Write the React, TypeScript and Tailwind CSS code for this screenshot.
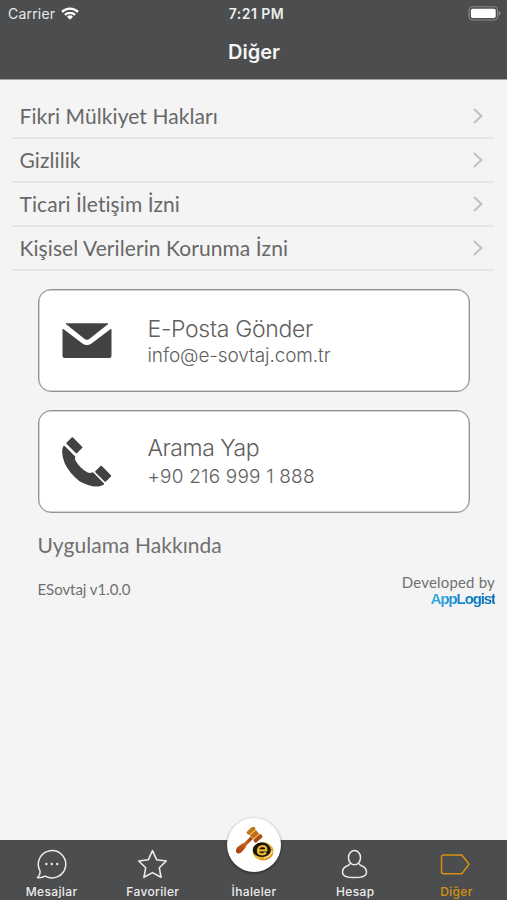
import React from "react";

const links = [
  "Fikri Mülkiyet Hakları",
  "Gizlilik",
  "Ticari İletişim İzni",
  "Kişisel Verilerin Korunma İzni",
];

function StatusBar() {
  return (
    <div className="relative flex h-[27px] items-center justify-between pl-[8px] pr-[6px] text-white">
      <div className="flex items-center gap-[6px]">
        <span className="text-[14px] leading-[20px] tracking-[0.2px] text-[#e8e8e8]">Carrier</span>
        <svg width="18" height="13" viewBox="0 0 18 13" fill="none" stroke="#fff" strokeWidth="2.3">
          <path d="M1 4.9a11.4 11.4 0 0 1 16 0" />
          <path d="M3.900 7.900a7.300 7.300 0 0 1 10.200 0" />
          <path d="M9 12.700 6 9.800a4.300 4.300 0 0 1 6 0z" fill="#fff" stroke="none" />
        </svg>
      </div>
      <span className="absolute inset-x-0 pl-[6px] text-center text-[14px] leading-[20px] font-semibold tracking-[0.45px] text-[#ededed]">
        7:21 PM
      </span>
      <svg width="33" height="15" viewBox="0 0 33 15">
        <rect x="1" y="0.8" width="28.6" height="13.2" rx="3.6" fill="none" stroke="#8a8b8c" strokeWidth="1.1" />
        <rect x="2.9" y="2.7" width="24.8" height="9.4" rx="1.8" fill="#fff" />
        <path d="M30.8 5.3q1.6.5 1.6 2.1t-1.6 2.1z" fill="#98999a" />
      </svg>
    </div>
  );
}

function ContactCard({ icon, children }: { icon: React.ReactNode; children: React.ReactNode }) {
  return (
    <section className="flex h-[103px] items-center rounded-[13px] border border-[#929292] bg-white pl-[23px] font-light text-[#606060] shadow-[inset_0_0_0_0.5px_#a8a8a8]">
      <div className="flex w-[86px] items-center">{icon}</div>
      <div className="flex flex-col pt-[2px]">{children}</div>
    </section>
  );
}

function Tab({ label, children }: { label: string; children: React.ReactNode }) {
  return (
    <div className="flex flex-1 flex-col items-center">
      <div className="flex h-[44px] items-end justify-center pb-[4.5px]">{children}</div>
      <span className="text-[12px] leading-[16px] font-medium tracking-[0.35px]">{label}</span>
    </div>
  );
}

export default function App() {
  return (
    <div className="flex h-[900px] w-[507px] flex-col overflow-hidden bg-[#f4f4f4] font-['Inter','Liberation_Sans',sans-serif]">
      <header className="h-[80px] shrink-0 border-b border-[#a3a4a4] bg-[#4c4d4f]">
        <StatusBar />
        <h1 className="pt-[11px] pl-px text-center text-[20px] leading-[28px] font-semibold text-[#f5f5f5]">Diğer</h1>
      </header>

      <main className="flex-1">
        <nav className="mx-[13px] mt-[15px] font-['Lato','Liberation_Sans',sans-serif]">
          {links.map((label) => (
            <a key={label} className="flex h-[44px] items-center justify-between border-b-2 border-[#e6e6e6] pl-[6.5px] pr-[11.5px] text-[21px] leading-[24px] tracking-[0.08px] text-[#686868]">
              <span>{label}</span>
              <svg width="10" height="16" viewBox="0 0 10 16" fill="none" stroke="#bfbfbf" strokeWidth="2">
                <path d="m1 1 7.4 7L1 15" />
              </svg>
            </a>
          ))}
        </nav>

        <div className="ml-[37.5px] mr-[37px] mt-[18px] flex flex-col gap-[18px]">
          <ContactCard
            icon={
              <svg width="50" height="36" viewBox="0 0 50 36" fill="#424242">
                <path d="M4 .7H46L27.2 15.7Q25 17.2 22.8 15.7Z" stroke="#424242" strokeWidth=".8" strokeLinejoin="round" />
                <path d="M.5 6.8q0-1.4 1.2-.6L20.4 20.5q4.6 3 9.2 0L48.3 6.2q1.2-.8 1.2.6V33q0 2-2 2H2.500q-2 0-2-2Z" />
              </svg>
            }
          >
            <span className="text-[23px] leading-[28px] tracking-[-0.3px]">E-Posta Gönder</span>
            <span className="text-[19px] leading-[25px] tracking-[-0.1px]">info@e-sovtaj.com.tr</span>
          </ContactCard>
          <ContactCard
            icon={
              <svg width="50" height="50" viewBox="0 0 50 50" fill="#424242">
                <rect x="-7.400" y="-4.500" width="14.800" height="9" rx="1" transform="translate(12.400 8.300) rotate(45)" />
                <rect x="-7.400" y="-4.500" width="14.800" height="9" rx="1" transform="translate(41.200 36.800) rotate(45)" />
                <path d="M1.300 9.200Q2 8.300 3 9.300L13 19.200Q13.600 19.800 13.200 20.600 12.700 21.500 13.500 23.500 17.500 30.800 25.200 35.300 28 36.500 30 35.600 30.900 35.100 31.500 35.700L41.600 46q1 1 0 1.700Q38 49.600 34.700 49.600 26 49.200 17.500 44.200 7.500 36.500 2.600 26-1.600 15 1.300 9.200Z" />
              </svg>
            }
          >
            <span className="text-[23px] leading-[28px] tracking-[-0.45px]">Arama Yap</span>
            <span className="text-[19px] leading-[29px] tracking-[0.18px]">+90 216 999 1 888</span>
          </ContactCard>
        </div>

        <section className="pl-[37.500px] pr-[12px] pt-[20px] font-['Lato','Liberation_Sans',sans-serif] text-[#707070]">
          <h2 className="text-[21px] leading-[24px] tracking-[0.05px]">Uygulama Hakkında</h2>
          <div className="mt-[16px] flex justify-between">
            <span className="pt-[7px] text-[15px] leading-[18px] tracking-[-0.05px]">ESovtaj v1.0.0</span>
            <div className="flex flex-col items-end">
              <span className="text-[15px] leading-[18px] tracking-[0.18px]">Developed by</span>
              <span className="bg-gradient-to-r from-[#36afe4] via-[#1484cb] via-50% to-[#086fb8] bg-clip-text font-['Liberation_Sans',sans-serif] text-[15px] leading-[16px] font-bold tracking-[-1.1px] text-transparent">
                AppLogist
              </span>
            </div>
          </div>
        </section>
      </main>

      <footer className="flex h-[60px] shrink-0 bg-[#4c4d4f] pl-px text-[#ececec]">
        <Tab label="Mesajlar">
          <svg width="32" height="32" viewBox="0.8 0 32 32" fill="none" stroke="currentColor" strokeWidth="1.5" strokeLinejoin="round">
            <path d="M4.700 22.600A13.700 13.700 0 1 1 10 28.100Q6.500 30 2.300 29.600Q5.600 26.800 4.700 22.600Z" />
            <g fill="currentColor" stroke="none"><circle cx="11.200" cy="16" r="1.200" /><circle cx="16.600" cy="16" r="1.200" /><circle cx="22" cy="16" r="1.200" /></g>
          </svg>
        </Tab>
        <Tab label="Favoriler">
          <svg width="32" height="32" viewBox="0.5 0 32 32" fill="none" stroke="currentColor" strokeWidth="1.6" strokeLinejoin="round">
            <path d="m16 2.700 4.200 9.100 9.600 1.200-7 6.800 1.800 9.500-8.600-4.700-8.600 4.700 1.800-9.500-7-6.800 9.600-1.200Z" />
          </svg>
        </Tab>
        <div className="relative flex flex-1 flex-col items-center">
          <div className="absolute -top-[22.500px] flex size-[54px] items-center justify-center rounded-full bg-white shadow-[0_1px_3px_rgba(0,0,0,0.5)]">
            <svg width="40" height="36" viewBox="0 0 40 36">
              <defs>
                <linearGradient id="wood" x1="0" y1="1" x2="1" y2="0">
                  <stop offset="0" stopColor="#a93410" /><stop offset=".55" stopColor="#ca641c" /><stop offset="1" stopColor="#8f3c10" />
                </linearGradient>
                <linearGradient id="gold" x1="0" y1="0" x2="1" y2="1">
                  <stop offset="0" stopColor="#a97012" /><stop offset=".5" stopColor="#f6c13c" /><stop offset="1" stopColor="#b86f0c" />
                </linearGradient>
              </defs>
              <path d="M2.500 25.800Q1 23 3.900 19.800 8 16.500 11 15.300L16.500 9.500l2.500 2.500L13 17.700Q11.500 21 8.300 24.500 5 27.700 2.500 25.800Z" fill="url(#wood)" />
              <g transform="translate(20.500 7.500) rotate(48)">
                <rect x="-5.500" y="-4" width="11" height="8" fill="#bf6a22" />
                <rect x="-7.300" y="-5" width="4" height="10" rx="1.800" fill="#b97a1c" />
                <rect x="3.300" y="-5" width="4" height="10" rx="1.800" fill="#a84a14" />
                <path d="M-2.800-4v8M2.800-4v8" stroke="#f5c24c" strokeWidth="1.200" />
              </g>
              <ellipse cx="29" cy="24.300" rx="10.500" ry="9.200" fill="url(#gold)" />
              <ellipse cx="27.800" cy="22.800" rx="9" ry="7.300" fill="#18140a" />
              <path d="M24.300 23.300h8q.2-4.300-3.700-4.300-4.300.2-4.700 4.500.1 3.800 4.100 3.800 2.600 0 4-1.800" fill="none" stroke="#edb735" strokeWidth="2.200" />
              <path d="M30 31q6.500-1 8.300-7" fill="none" stroke="#ffe08a" strokeWidth="1.300" />
            </svg>
          </div>
          <span className="pt-[44px] text-[12px] leading-[16px] font-medium tracking-[0.35px]">İhaleler</span>
        </div>
        <Tab label="Hesap">
          <svg width="32" height="32" viewBox="0.5 0 32 32" fill="none" stroke="currentColor" strokeWidth="1.500" strokeLinejoin="round">
            <ellipse cx="16" cy="9.600" rx="6" ry="7.200" />
            <path d="M11.400 15.400q-.1 1.500-2.400 2.400-5 1.700-5 6.600 0 5.200 12 5.200t12-5.200q0-4.900-5-6.600-2.300-.9-2.400-2.400" />
          </svg>
        </Tab>
        <div className="flex flex-1 text-[#d6920f]">
          <Tab label="Diğer">
            <svg width="32" height="32" viewBox="0.500 0 32 32" fill="none" stroke="currentColor" strokeWidth="1.500" strokeLinejoin="round">
              <path d="M4.200 7H22.300L29.600 16.300 22.300 25.700H4.200Q2 25.700 2 23.500V9.200Q2 7 4.200 7Z" />
            </svg>
          </Tab>
        </div>
      </footer>
    </div>
  );
}
